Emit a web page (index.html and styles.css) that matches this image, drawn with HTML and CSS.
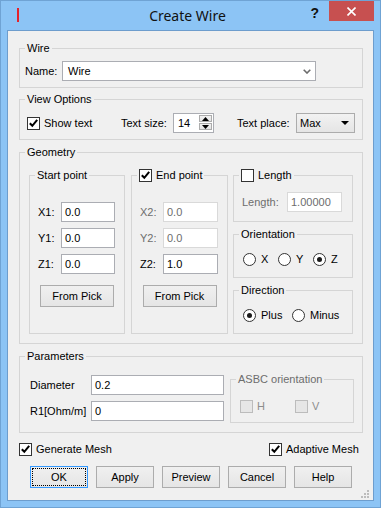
FILE: index.html
```html
<!DOCTYPE html>
<html lang="en">
<head>
  <meta charset="UTF-8">
  <title>Create Wire</title>
  <link rel="stylesheet" href="styles.css">
</head>
<body>
  <div class="window">
    <div class="titlebar">
      <div class="title-left"><span class="app-icon"></span></div>
      <div class="title">Create Wire</div>
      <div class="title-right">
        <span class="help-btn">?</span>
        <span class="close-btn">
          <svg width="9" height="9" viewBox="0 0 9 9"><path d="M0.5 0.5 L8.5 8.5 M8.5 0.5 L0.5 8.5" stroke="#fff" stroke-width="1.6"/></svg>
        </span>
      </div>
    </div>

    <div class="client">
      <fieldset class="group group-wire">
        <legend>Wire</legend>
        <div class="wire-row">
          <label class="lbl-name">Name:</label>
          <div class="combo combo-name">
            <span>Wire</span>
            <svg width="8" height="5" viewBox="0 0 8 5"><path d="M0.7 0.7 L4 4 L7.3 0.7" stroke="#6b6b6b" stroke-width="1.6" fill="none"/></svg>
          </div>
        </div>
      </fieldset>

      <fieldset class="group group-view">
        <legend>View Options</legend>
        <div class="view-row">
          <label class="check check-show"><span class="box checked"></span>Show text</label>
          <label class="lbl-size">Text size:</label>
          <div class="spin">
            <span class="spin-value">14</span>
            <div class="spin-buttons">
              <span class="spin-btn"><svg width="7" height="4" viewBox="0 0 7 4"><path d="M0 4 L3.5 0 L7 4 Z" fill="#000"/></svg></span>
              <span class="spin-btn"><svg width="7" height="4" viewBox="0 0 7 4"><path d="M0 0 L3.5 4 L7 0 Z" fill="#000"/></svg></span>
            </div>
          </div>
          <label class="lbl-place">Text place:</label>
          <div class="combo combo-place">
            <span>Max</span>
            <svg width="8" height="4" viewBox="0 0 8 4"><path d="M0 0 L4 4 L8 0 Z" fill="#000"/></svg>
          </div>
        </div>
      </fieldset>

      <fieldset class="group group-geometry">
        <legend>Geometry</legend>
        <div class="geometry-row">
          <fieldset class="group point-group start-point">
            <legend>Start point</legend>
            <div class="coord-row"><label>X1:</label><div class="input">0.0</div></div>
            <div class="coord-row"><label>Y1:</label><div class="input">0.0</div></div>
            <div class="coord-row"><label>Z1:</label><div class="input">0.0</div></div>
            <div class="button pick-btn">From Pick</div>
          </fieldset>

          <fieldset class="group point-group end-point">
            <legend><label class="check"><span class="box checked"></span>End point</label></legend>
            <div class="coord-row disabled"><label>X2:</label><div class="input">0.0</div></div>
            <div class="coord-row disabled"><label>Y2:</label><div class="input">0.0</div></div>
            <div class="coord-row"><label>Z2:</label><div class="input">1.0</div></div>
            <div class="button pick-btn">From Pick</div>
          </fieldset>

          <div class="side-col">
            <fieldset class="group length-group">
              <legend><label class="check"><span class="box"></span>Length</label></legend>
              <div class="length-row disabled"><label>Length:</label><div class="input">1.00000</div></div>
            </fieldset>

            <fieldset class="group radio-group">
              <legend>Orientation</legend>
              <div class="radio-row">
                <label class="radio radio-axis"><span class="dot"></span>X</label>
                <label class="radio radio-axis"><span class="dot"></span>Y</label>
                <label class="radio radio-axis"><span class="dot checked"></span>Z</label>
              </div>
            </fieldset>

            <fieldset class="group radio-group">
              <legend>Direction</legend>
              <div class="radio-row">
                <label class="radio radio-plus"><span class="dot checked"></span>Plus</label>
                <label class="radio"><span class="dot"></span>Minus</label>
              </div>
            </fieldset>
          </div>
        </div>
      </fieldset>

      <fieldset class="group group-params">
        <legend>Parameters</legend>
        <div class="params-row">
          <div class="params-fields">
            <div class="param-row"><label>Diameter</label><div class="input">0.2</div></div>
            <div class="param-row"><label>R1[Ohm/m]</label><div class="input">0</div></div>
          </div>
          <fieldset class="group asbc-group">
            <legend>ASBC orientation</legend>
            <div class="asbc-row">
              <label class="check disabled check-h"><span class="box"></span>H</label>
              <label class="check disabled"><span class="box"></span>V</label>
            </div>
          </fieldset>
        </div>
      </fieldset>

      <div class="footer-checks">
        <label class="check"><span class="box checked"></span>Generate Mesh</label>
        <label class="check"><span class="box checked"></span>Adaptive Mesh</label>
      </div>

      <div class="button-row">
        <div class="button default">OK</div>
        <div class="button">Apply</div>
        <div class="button">Preview</div>
        <div class="button">Cancel</div>
        <div class="button">Help</div>
      </div>

      <svg class="size-grip" width="8" height="8" viewBox="0 0 8 8" fill="#bcbcbc">
        <rect x="6" y="0" width="2" height="2"/>
        <rect x="3" y="3" width="2" height="2"/><rect x="6" y="3" width="2" height="2"/>
        <rect x="0" y="6" width="2" height="2"/><rect x="3" y="6" width="2" height="2"/><rect x="6" y="6" width="2" height="2"/>
      </svg>
    </div>
  </div>
</body>
</html>
```

FILE: styles.css
```css
* {
  margin: 0;
  padding: 0;
  box-sizing: border-box;
}

body {
  background: #8cc4f5;
  font-family: 'Liberation Sans', Arial, sans-serif;
  font-size: 11px;
  color: #000;
}

.window {
  width: 381px;
  height: 508px;
  background: #8cc4f5;
  border: 1px solid #6fa3d4;
  display: flex;
  flex-direction: column;
}

/* title bar */
.titlebar {
  height: 29px;
  display: grid;
  grid-template-columns: 1fr auto 1fr;
  padding-right: 6px;
}

.title-left {
  padding: 7px 0 0 16px;
}

.app-icon {
  display: block;
  width: 2px;
  height: 14px;
  background: #e4222c;
}

.title {
  font-family: 'Noto Sans', 'Liberation Sans', sans-serif;
  font-size: 14px;
  line-height: 29px;
  color: #111;
}

.title-right {
  display: flex;
  justify-content: flex-end;
  align-items: flex-start;
}

.help-btn {
  font-size: 14px;
  font-weight: bold;
  line-height: 14px;
  margin: 5px 10px 0 0;
  color: #111;
}

.close-btn {
  width: 45px;
  height: 20px;
  background: #c75050;
  display: flex;
  align-items: center;
  justify-content: center;
}

/* client area */
.client {
  flex: 1;
  position: relative;
  margin: 0 6px 6px;
  background: #f0f0f0;
  border: 1px solid #6d9dcd;
  padding: 11px 10px 0 11px;
  display: flex;
  flex-direction: column;
}

.group {
  border: 1px solid #d5d5d5;
  min-width: 0;
}

.group > legend {
  margin-left: 5px;
  padding: 0 2px;
  height: 13px;
  line-height: 13px;
}

.group-view,
.group-geometry {
  margin-top: 5px;
}

.group-geometry,
.group-params {
  margin-top: 6px;
}

/* controls */
.input {
  height: 20px;
  background: #fff;
  border: 1px solid #abadb3;
  padding-left: 3px;
  line-height: 18px;
}

.check {
  display: flex;
  align-items: center;
  gap: 4px;
  line-height: 13px;
}

.box {
  width: 13px;
  height: 13px;
  background: #fff;
  border: 1px solid #333;
  flex: none;
}

.box.checked {
  background: #fff url("data:image/svg+xml,%3Csvg xmlns='http://www.w3.org/2000/svg' width='11' height='11'%3E%3Cpath d='M1.8 5.2 L4.3 7.8 L9.2 1.8' stroke='%23000' stroke-width='2' fill='none'/%3E%3C/svg%3E") no-repeat center;
}

.check.disabled {
  color: #8d8d8d;
}

.check.disabled .box {
  background: #e6e6e6;
  border-color: #bcbcbc;
}

.disabled label {
  color: #6d6d6d;
}

.disabled .input {
  border-color: #d9d9d9;
  color: #6d6d6d;
}

.combo {
  height: 20px;
  display: flex;
  align-items: center;
  justify-content: space-between;
}

.button {
  height: 22px;
  border: 1px solid #acacac;
  background: linear-gradient(#f0f0f0, #e5e5e5);
  display: flex;
  align-items: center;
  justify-content: center;
}

/* wire */
.wire-row {
  display: flex;
  align-items: center;
  padding: 6px 0 6px 5px;
}

.lbl-name {
  width: 37px;
}

.combo-name {
  width: 254px;
  background: #fff;
  border: 1px solid #abadb3;
  padding: 0 4px 0 5px;
}

/* view options */
.view-row {
  display: flex;
  align-items: center;
  height: 20px;
  box-sizing: content-box;
  padding: 7px 0 6px 7px;
}

.check-show {
  width: 94px;
}

.lbl-size {
  width: 52px;
}

.spin {
  width: 41px;
  height: 20px;
  background: #fff;
  border: 1px solid #abadb3;
  display: flex;
}

.spin-value {
  padding-left: 4px;
  line-height: 18px;
  flex: 1;
}

.spin-buttons {
  width: 13px;
  margin: 1px 1px 2px 0;
  display: flex;
  flex-direction: column;
  gap: 1px;
}

.spin-btn {
  flex: 1;
  border: 1px solid #acacac;
  background: linear-gradient(#f2f2f2, #e3e3e3);
  display: flex;
  align-items: center;
  justify-content: center;
}

.lbl-place {
  width: 59px;
  margin-left: 23px;
}

.combo-place {
  width: 59px;
  border: 1px solid #acacac;
  background: linear-gradient(#f2f2f2, #e5e5e5);
  padding: 0 5px 0 3px;
}

/* geometry */
.geometry-row {
  display: flex;
  padding: 10px 9px 9px;
}

.point-group {
  padding: 20px 0 20px;
}

.start-point {
  width: 96px;
  margin-right: 6px;
}

.end-point {
  width: 97px;
  margin-right: 5px;
}

.coord-row {
  display: flex;
  align-items: center;
  padding-left: 8px;
  margin-bottom: 6px;
}

.coord-row label {
  width: 23px;
}

.coord-row .input {
  width: 54px;
}

.end-point .coord-row .input {
  width: 55px;
}

.pick-btn {
  width: 74px;
  margin: 11px auto 0;
}

.side-col {
  width: 120px;
  display: flex;
  flex-direction: column;
  gap: 6px;
}

.length-row {
  display: flex;
  align-items: center;
  padding: 10px 0 9px 8px;
}

.length-row label {
  width: 45px;
}

.length-row .input {
  width: 55px;
}

.radio-row {
  display: flex;
  padding: 12px 0 11px 9px;
}

.radio {
  display: flex;
  align-items: center;
  gap: 5px;
  line-height: 13px;
}

.radio-axis {
  width: 35px;
}

.radio-plus {
  width: 49px;
}

.dot {
  width: 13px;
  height: 13px;
  border-radius: 50%;
  border: 1px solid #333;
  background: #fff;
  display: flex;
  align-items: center;
  justify-content: center;
}

.dot.checked::after {
  content: '';
  width: 5px;
  height: 5px;
  border-radius: 50%;
  background: #1a1a1a;
}

/* parameters */
.params-row {
  display: flex;
  padding: 0 0 9px 10px;
}

.params-fields {
  margin-top: 12px;
  display: flex;
  flex-direction: column;
  gap: 6px;
}

.param-row {
  display: flex;
  align-items: center;
}

.param-row label {
  width: 61px;
}

.param-row .input {
  width: 133px;
}

.asbc-group {
  width: 124px;
  margin: 10px 0 0 6px;
}

.asbc-group > legend {
  color: #6d6d6d;
}

.asbc-row {
  display: flex;
  padding: 14px 0 9px 9px;
}

.check-h {
  width: 55px;
}

/* footer */
.footer-checks {
  display: grid;
  grid-template-columns: 250px auto;
  margin-top: 10px;
}

.button-row {
  display: flex;
  gap: 8px;
  margin-top: 10px;
  padding-left: 11px;
}

.button-row .button {
  width: 58px;
}

.button.default {
  border-color: #3399ff;
  position: relative;
}

.button.default::after {
  content: '';
  position: absolute;
  inset: 1px;
  border: 1px dotted #000;
}

.size-grip {
  position: absolute;
  right: 4px;
  bottom: 2px;
}
```
